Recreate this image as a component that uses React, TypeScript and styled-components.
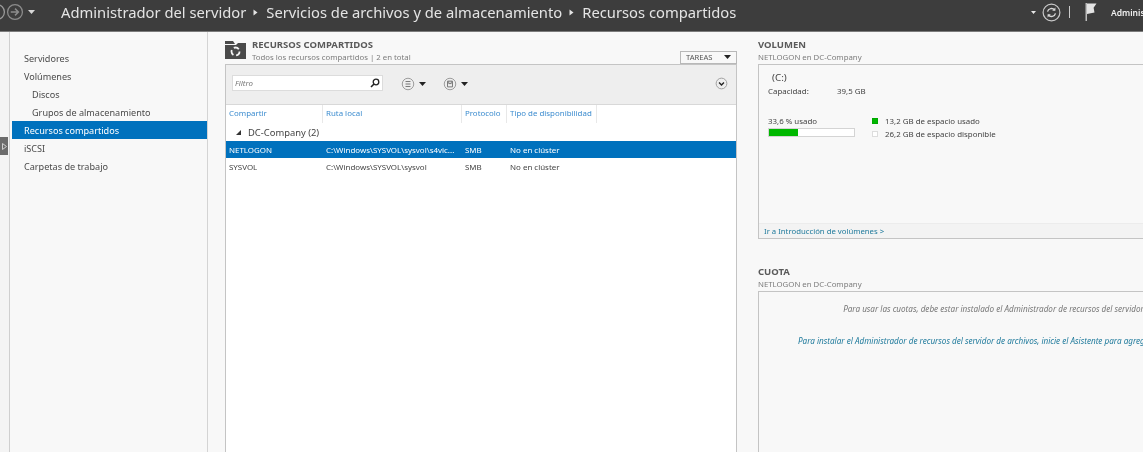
import React from "react";
import styled, { createGlobalStyle } from "styled-components";

const Global = createGlobalStyle`
  *, *::before, *::after { box-sizing: border-box; }
  html, body { margin: 0; padding: 0; background: #f8f8f8; }
  body { font-family: "Noto Sans", "Open Sans", sans-serif; color: #444; }
`;

const Page = styled.div`
  width: 1143px; height: 452px; overflow: hidden; filter: blur(0.3px);
  display: flex; flex-direction: column; background: #f8f8f8;
`;
const Header = styled.header`
  height: 32px; flex: none; background: #3d3d3d; display: flex; align-items: flex-start;
  border-bottom: 1px solid #7c7c7c; color: #e6e6e6; overflow: hidden;
`;
const NavButtons = styled.div`
  width: 73px; flex: none; height: 24px; display: flex; align-items: center; gap: 0; margin-left: -12px;
  svg { flex: none; }
`;
const Crumbs = styled.div`
  display: flex; align-items: center; height: 24px; font-size: 14.75px; color: #e4e4e4; white-space: nowrap;
`;
const Tools = styled.div`
  margin-left: auto; height: 24px; width: 116px; flex: none; display: flex; align-items: center; overflow: hidden;
  svg { flex: none; }
`;
const UserName = styled.span`
  font-size: 8.5px; font-weight: 600; color: #f0f0f0; margin-left: 14px; white-space: nowrap;
`;
const ToolSep = styled.span`
  width: 1px; height: 12px; background: #ccc; margin: 0 15px 0 8px; flex: none;
`;
const Sep = styled.svg`
  width: 5px; height: 7px; margin: 0 8px 0 7px; fill: #e4e4e4; flex: none;
`;

const Body = styled.div`
  flex: 1; display: flex; min-height: 0;
`;
const Rail = styled.div`
  width: 10px; flex: none; background: #f4f4f4; border-right: 1px solid #cfcfcf; position: relative; margin-right: 2px;
`;
const Handle = styled.div`
  position: absolute; left: 0; top: 105px; width: 8px; height: 18px; background: #6c6c6c;
  display: flex; align-items: center; justify-content: center;
`;
const Nav = styled.nav`
  width: 196px; flex: none; padding: 17px 0 0; border-right: 1px solid #d4d4d4; margin-right: 17px;
  display: flex; flex-direction: column;
`;
const NavItem = styled.div<{ $active?: boolean; $sub?: boolean }>`
  height: 18px; line-height: 19px; font-size: 9.1px; white-space: nowrap;
  padding-left: ${(p) => (p.$sub ? 20 : 12)}px;
  background: ${(p) => (p.$active ? "#0071bd" : "transparent")};
  color: ${(p) => (p.$active ? "#fff" : "#4a4a4a")};
`;
const Main = styled.section`
  width: 512px; flex: none; margin-right: 21px; display: flex; flex-direction: column; padding-top: 7px;
`;
const TitleRow = styled.div`
  height: 25px; flex: none; display: flex; align-items: flex-start;
`;
const TitleIcon = styled.svg`
  width: 21px; height: 18px; margin: 2px 6px 0 0; flex: none;
`;
const TitleText = styled.div`
  flex: 1;
`;
const Title = styled.div`
  font-size: 9.5px; font-weight: 700; color: #5a5a5a; line-height: 12px; white-space: nowrap;
`;
const Subtitle = styled.div`
  font-size: 7.8px; color: #7c7c7c; line-height: 12px; white-space: nowrap;
`;
const TaskButton = styled.div`
  width: 57px; height: 13px; margin-top: 12px; border: 1px solid #b8b8b8; background: #f8f8f8;
  display: flex; align-items: center; padding: 0 0 1px 5px; font-size: 7.6px; color: #555; gap: 11px; flex: none;
`;
const Caret = styled.svg`
  width: 7px; height: 4px; fill: #222; flex: none;
`;
const Panel = styled.div`
  flex: 1; border: 1px solid #c4c4c4; border-bottom: none; background: #fff; display: flex; flex-direction: column; min-height: 0;
`;
const Toolbar = styled.div`
  height: 40px; flex: none; background: #eeeeee; border-bottom: 1px solid #d8d8d8; display: flex; align-items: flex-start; padding: 10px 8px 0 6px;
`;
const Filter = styled.div`
  width: 151px; height: 16px; background: #fff; border: 1px solid #dcdcdc; display: flex; align-items: center; justify-content: space-between; padding: 0 2px 0 2px;
  font-size: 7.9px; font-style: italic; color: #777; flex: none;
`;
const ToolIconGroup = styled.div<{ $gap: number }>`
  display: flex; align-items: center; gap: 4px; height: 17px; margin-left: ${(p) => p.$gap}px;
`;
const Expand = styled.div`
  margin-left: auto; height: 17px; display: flex; align-items: center;
`;
const Columns = styled.div`
  display: grid; grid-template-columns: 97px 139px 45px 90px; height: 18px; flex: none;
`;
const Column = styled.div`
  font-size: 7.9px; color: #3c8ccf; line-height: 17px; padding-left: 3px; border-right: 1px solid #e8e8e8; white-space: nowrap;
`;
const Group = styled.div`
  height: 17px; display: flex; align-items: center; font-size: 9.4px; color: #444; padding-left: 10px; gap: 7px; margin-top: 1px; flex: none;
`;
const GroupMark = styled.svg`
  width: 5px; height: 5px; fill: #333; flex: none;
`;
const Row = styled.div<{ $selected?: boolean }>`
  display: grid; grid-template-columns: 97px 139px 45px 1fr; height: 17px; flex: none; align-items: center;
  background: ${(p) => (p.$selected ? "#0071bd" : "#fff")};
  color: ${(p) => (p.$selected ? "#fff" : "#444")};
  font-size: 7.95px;
`;
const Cell = styled.div`
  padding-left: 3px; white-space: nowrap;
`;
const Side = styled.aside`
  width: 516px; flex: none; padding-top: 7px; display: flex; flex-direction: column;
`;
const SideHead = styled.div`
  height: 25px; flex: none;
`;
const VolumePanel = styled.div`
  height: 175px; flex: none; border: 1px solid #c4c4c4; margin-bottom: 27px; display: flex; flex-direction: column;
`;
const VolumeBody = styled.div`
  flex: 1; padding: 6px 9px; font-size: 7.9px; color: #444;
`;
const Drive = styled.div`
  font-size: 9.8px; line-height: 13px; padding-left: 4px;
`;
const Capacity = styled.div`
  display: flex; line-height: 12px; white-space: nowrap; margin-top: 1px;
`;
const CapLabel = styled.span`
  width: 69px;
`;
const Usage = styled.div`
  display: flex; margin-top: 18px; align-items: flex-start;
`;
const UsageLeft = styled.div`
  width: 104px; flex: none; line-height: 12px;
`;
const Bar = styled.div`
  width: 87px; height: 9px; border: 1px solid #d4d4d4; background: #fff; margin-top: 1px;
`;
const BarFill = styled.div`
  height: 100%; background: #00b800;
`;
const Legend = styled.div`
  display: flex; flex-direction: column; margin-top: -1px;
`;
const LegendRow = styled.div`
  display: flex; align-items: center; gap: 7px; height: 13px; white-space: nowrap;
`;
const Swatch = styled.span<{ $filled?: boolean }>`
  width: 6px; height: 6px; flex: none; background: ${(p) => (p.$filled ? "#00b800" : "#fff")};
  border: 1px solid ${(p) => (p.$filled ? "#00a800" : "#ddd")};
`;
const VolumeFoot = styled.div`
  height: 15px; flex: none; font-size: 7.75px; color: #1f7a9c; line-height: 14px; padding-left: 5px; background: #f3f3f3; border-top: 1px solid #ececec;
`;
const QuotaPanel = styled.div`
  flex: 1; border: 1px solid #c4c4c4; border-bottom: none; display: flex; flex-direction: column; align-items: center; font-style: italic; font-size: 8.15px; padding-top: 11px; white-space: nowrap;
`;
const QuotaNote = styled.div`
  color: #777; height: 32px; line-height: 12px;
`;
const QuotaLink = styled.div`
  color: #1f7a9c; line-height: 12px;
`;

const CircleIcon = ({ size = 17, stroke = "#9a9a9a", children }: { size?: number; stroke?: string; children?: React.ReactNode }) => (
  <svg width={size} height={size} viewBox="0 0 17 17" fill="none">
    <circle cx="8.5" cy="8.5" r="7" stroke={stroke} strokeWidth="1.2" />
    {children}
  </svg>
);

const SmallCaret = () => (
  <Caret viewBox="0 0 7 4"><path d="M0 0h7L3.5 4z" /></Caret>
);

export default function App() {
  return (
    <Page>
      <Global />
      <Header>
        <NavButtons>
          <CircleIcon size={18} stroke="#9a9a9a" />
          <CircleIcon size={18} stroke="#8c8c8c">
            <path d="M4.5 8.5h7M8.5 5.3l3.2 3.2-3.2 3.2" stroke="#8c8c8c" strokeWidth="1.4" />
          </CircleIcon>
          <svg width="7" height="4" viewBox="0 0 7 4" style={{ marginLeft: 4 }}><path d="M0 0h7L3.5 4z" fill="#d8d8d8" /></svg>
        </NavButtons>
        <Crumbs>
          Administrador del servidor
          <Sep viewBox="0 0 5 7"><path d="M0.5 0.5 4.5 3.5 0.5 6.5z" /></Sep>
          Servicios de archivos y de almacenamiento
          <Sep viewBox="0 0 5 7"><path d="M0.5 0.5 4.5 3.5 0.5 6.5z" /></Sep>
          Recursos compartidos
        </Crumbs>
        <Tools>
          <svg width="5" height="3" viewBox="0 0 5 3" style={{ margin: "0 6px 0 4px" }}><path d="M0 0h5L2.5 3z" fill="#e8e8e8" /></svg>
          <svg width="19" height="19" viewBox="0 0 19 19" fill="none">
            <circle cx="9.5" cy="9.5" r="8.4" stroke="#c8c8c8" strokeWidth="1.2" />
            <path d="M5.5 8.6a4.1 4.1 0 0 1 7.2-1.5M13.5 10.4a4.1 4.1 0 0 1-7.2 1.5" stroke="#d6d6d6" strokeWidth="1.4" />
            <path d="M13.4 4.6v3.2h-3.2zM5.6 14.4v-3.2h3.2z" fill="#d6d6d6" />
          </svg>
          <ToolSep />
          <svg width="12" height="18" viewBox="0 0 12 18"><path d="M0.5 0h1.5v18H0.5z" fill="#bdbdbd" /><path d="M2 0.5h9.5L8.6 4.8 9.5 9.5 2 11z" fill="#e4e4e4" /></svg>
          <UserName>Administrador</UserName>
        </Tools>
      </Header>
      <Body>
        <Rail>
          <Handle>
            <svg width="5" height="7" viewBox="0 0 5 7" fill="none"><path d="M0.5 0.5 4.5 3.5 0.5 6.5z" stroke="#cfcfcf" /></svg>
          </Handle>
        </Rail>
        <Nav>
          <NavItem>Servidores</NavItem>
          <NavItem>Volúmenes</NavItem>
          <NavItem $sub>Discos</NavItem>
          <NavItem $sub>Grupos de almacenamiento</NavItem>
          <NavItem $active>Recursos compartidos</NavItem>
          <NavItem>iSCSI</NavItem>
          <NavItem>Carpetas de trabajo</NavItem>
        </Nav>
        <Main>
          <TitleRow>
            <TitleIcon viewBox="0 0 21 18">
              <path d="M0 0h8l2 3H0z" fill="#4a4a4a" />
              <path d="M0 4h11l2-2h8v16H0z" fill="#4a4a4a" />
              <circle cx="10.5" cy="10.5" r="4" fill="none" stroke="#f4f4f4" strokeWidth="1.8" strokeDasharray="5.5 2.8" />
            </TitleIcon>
            <TitleText>
              <Title>RECURSOS COMPARTIDOS</Title>
              <Subtitle>Todos los recursos compartidos | 2 en total</Subtitle>
            </TitleText>
            <TaskButton>TAREAS <SmallCaret /></TaskButton>
          </TitleRow>
          <Panel>
            <Toolbar>
              <Filter>
                Filtro
                <svg width="10" height="10" viewBox="0 0 10 10" fill="none">
                  <circle cx="6" cy="4" r="2.8" stroke="#222" strokeWidth="1.3" />
                  <path d="M4 6 1 9" stroke="#222" strokeWidth="1.6" />
                </svg>
              </Filter>
              <ToolIconGroup $gap={18}>
                <CircleIcon size={14}>
                  <path d="M5.5 5.5h6M5.5 8.5h6M5.5 11.5h6" stroke="#777" strokeWidth="1.2" />
                </CircleIcon>
                <SmallCaret />
              </ToolIconGroup>
              <ToolIconGroup $gap={17}>
                <CircleIcon size={14}>
                  <path d="M5.5 5h6v7h-6zM7 5v3h3V5" stroke="#777" strokeWidth="1.2" fill="none" />
                </CircleIcon>
                <SmallCaret />
              </ToolIconGroup>
              <Expand>
                <CircleIcon size={13} stroke="#999">
                  <path d="M5.3 7.2 8.5 10.4 11.7 7.2" stroke="#222" strokeWidth="1.8" />
                </CircleIcon>
              </Expand>
            </Toolbar>
            <Columns>
              <Column>Compartir</Column>
              <Column>Ruta local</Column>
              <Column>Protocolo</Column>
              <Column>Tipo de disponibilidad</Column>
            </Columns>
            <Group>
              <GroupMark viewBox="0 0 5 5"><path d="M5 0v5H0z" /></GroupMark>
              DC-Company (2)
            </Group>
            <Row $selected>
              <Cell>NETLOGON</Cell>
              <Cell>C:\Windows\SYSVOL\sysvol\s4vic...</Cell>
              <Cell>SMB</Cell>
              <Cell>No en clúster</Cell>
            </Row>
            <Row>
              <Cell>SYSVOL</Cell>
              <Cell>C:\Windows\SYSVOL\sysvol</Cell>
              <Cell>SMB</Cell>
              <Cell>No en clúster</Cell>
            </Row>
          </Panel>
        </Main>
        <Side>
          <SideHead>
            <Title>VOLUMEN</Title>
            <Subtitle>NETLOGON en DC-Company</Subtitle>
          </SideHead>
          <VolumePanel>
            <VolumeBody>
              <Drive>(C:)</Drive>
              <Capacity><CapLabel>Capacidad:</CapLabel>39,5 GB</Capacity>
              <Usage>
                <UsageLeft>
                  33,6 % usado
                  <Bar><BarFill style={{ width: "33.6%" }} /></Bar>
                </UsageLeft>
                <Legend>
                  <LegendRow><Swatch $filled />13,2 GB de espacio usado</LegendRow>
                  <LegendRow><Swatch />26,2 GB de espacio disponible</LegendRow>
                </Legend>
              </Usage>
            </VolumeBody>
            <VolumeFoot>Ir a Introducción de volúmenes &gt;</VolumeFoot>
          </VolumePanel>
          <SideHead>
            <Title>CUOTA</Title>
            <Subtitle>NETLOGON en DC-Company</Subtitle>
          </SideHead>
          <QuotaPanel>
            <QuotaNote>Para usar las cuotas, debe estar instalado el Administrador de recursos del servidor de archivos.</QuotaNote>
            <QuotaLink>Para instalar el Administrador de recursos del servidor de archivos, inicie el Asistente para agregar roles y características.</QuotaLink>
          </QuotaPanel>
        </Side>
      </Body>
    </Page>
  );
}
